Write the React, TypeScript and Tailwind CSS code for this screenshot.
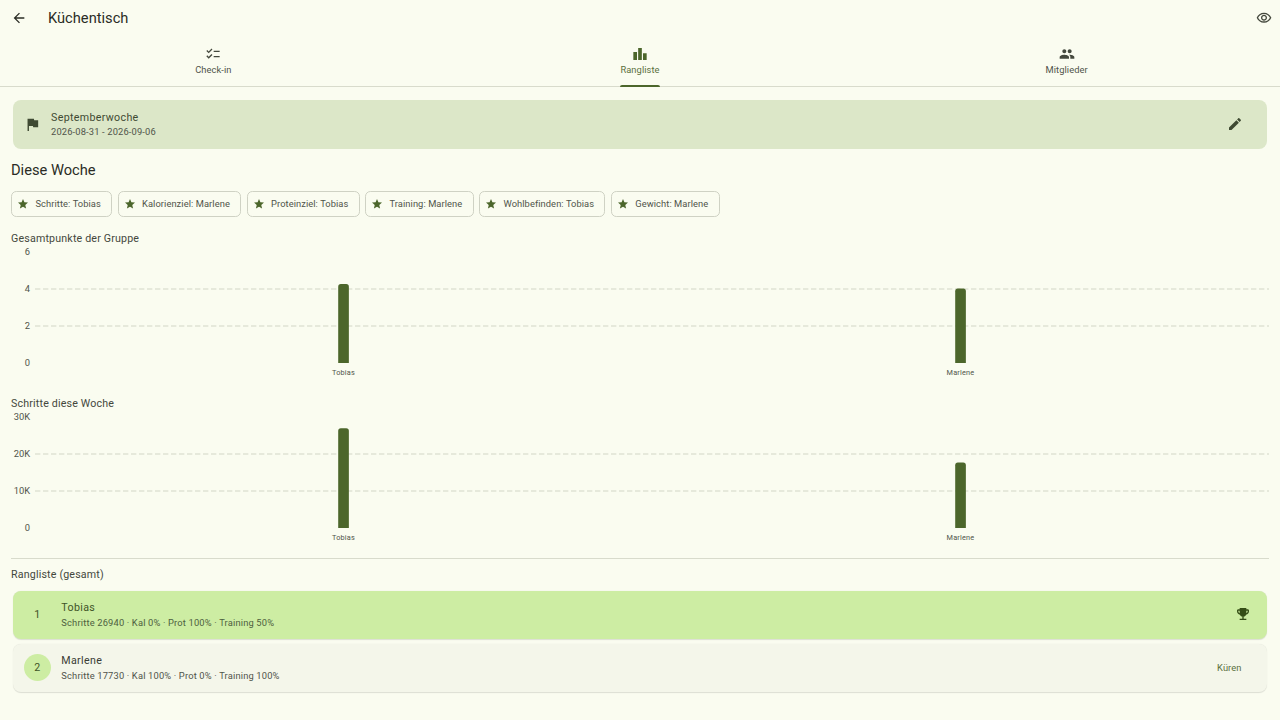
import React from "react";

const P = {
  back: "M20 11H7.83l5.59-5.59L12 4l-8 8 8 8 1.41-1.41L7.83 13H20v-2z",
  eye: "M12 6c3.79 0 7.17 2.13 8.82 5.5C19.17 14.87 15.79 17 12 17s-7.17-2.13-8.82-5.5C4.83 8.13 8.21 6 12 6m0-2C7 4 2.73 7.11 1 11.5 2.73 15.89 7 19 12 19s9.27-3.11 11-7.5C21.27 7.11 17 4 12 4zm0 5c1.38 0 2.5 1.12 2.5 2.5S13.38 14 12 14s-2.5-1.12-2.5-2.5S10.62 9 12 9m0-2c-2.48 0-4.5 2.02-4.5 4.5S9.52 16 12 16s4.5-2.02 4.5-4.5S14.48 7 12 7z",
  check: "M22 7h-9v2h9V7zm0 8h-9v2h9v-2zM5.54 11 2 7.46l1.41-1.41 2.12 2.12 4.24-4.24 1.41 1.41L5.54 11zm0 8L2 15.46l1.41-1.41 2.12 2.12 4.24-4.24 1.41 1.41L5.54 19z",
  bars: "M7.5 21H2V9h5.5v12zm7.25-18h-5.5v18h5.5V3zM22 11h-5.5v10H22V11z",
  group: "M16 11c1.66 0 2.99-1.34 2.99-3S17.66 5 16 5c-1.66 0-3 1.34-3 3s1.34 3 3 3zm-8 0c1.66 0 2.99-1.34 2.99-3S9.66 5 8 5C6.34 5 5 6.34 5 8s1.34 3 3 3zm0 2c-2.33 0-7 1.17-7 3.5V19h14v-2.5c0-2.33-4.67-3.5-7-3.5zm8 0c-.29 0-.62.02-.97.05 1.16.84 1.97 1.97 1.97 3.45V19h6v-2.5c0-2.33-4.67-3.5-7-3.5z",
  flag: "M14.4 6 14 4H5v17h2v-7h5.6l.4 2h7V6z",
  edit: "M3 17.25V21h3.75L17.81 9.94l-3.75-3.75L3 17.25zM20.71 7.04c.39-.39.39-1.02 0-1.41l-2.34-2.34c-.39-.39-1.02-.39-1.41 0l-1.83 1.83 3.75 3.75 1.83-1.83z",
  star: "M12 17.27 18.18 21l-1.64-7.03L22 9.24l-7.19-.61L12 2 9.19 8.63 2 9.24l5.46 4.73L5.82 21z",
  trophy: "M19 5h-2V3H7v2H5c-1.1 0-2 .9-2 2v1c0 2.55 1.92 4.63 4.39 4.94.63 1.5 1.98 2.63 3.61 2.96V19H7v2h10v-2h-4v-3.1c1.63-.33 2.98-1.46 3.61-2.96C19.08 12.63 21 10.55 21 8V7c0-1.1-.9-2-2-2zM5 8V7h2v3.82C5.84 10.4 5 9.3 5 8zm14 0c0 1.3-.84 2.4-2 2.82V7h2v1z",
};

function Icon({ d, size = 16, className = "" }: { d: string; size?: number; className?: string }) {
  return (
    <svg viewBox="0 0 24 24" width={size} height={size} fill="currentColor" className={`shrink-0 ${className}`}>
      <path d={d} />
    </svg>
  );
}

function Tab({ icon, label, active }: { icon: string; label: string; active?: boolean }) {
  return (
    <div className="relative flex flex-col items-center pt-[10px]">
      <Icon d={icon} size={16} className={active ? "text-[#4c662b]" : "text-[#44483d]"} />
      <span className={`mt-[1px] text-[9.33px] leading-[14px] tracking-[0.07px] ${active ? "text-[#5a7040]" : "text-[#50544a]"}`}>
        {label}
      </span>
      {active && <span className="absolute bottom-[-1px] h-[2px] w-[40px] rounded-t-[2px] bg-[#4c662b]" />}
    </div>
  );
}

function Chip({ label }: { label: string }) {
  return (
    <div className="flex h-[25.5px] items-center gap-[6.5px] rounded-[5.33px] border border-[#cfd2c4] pl-[5px] pr-[10.3px]">
      <Icon d={P.star} size={12} className="text-[#4c662b]" />
      <span className="text-[9.33px] tracking-[0.07px] text-[#50544a]">{label}</span>
    </div>
  );
}

function Chart({ title, ticks, values }: { title: string; ticks: string[]; values: number[] }) {
  const H = 111;
  const W = 1234;
  return (
    <div>
      <div className="mb-[5px] h-[16px] text-[10.67px] leading-[16px] tracking-[0.17px] text-[#44483d]">{title}</div>
      <div className="flex h-[111px] items-stretch">
        <div className="-my-[6px] flex w-[19px] flex-col justify-between text-right text-[9.33px] leading-[12px] text-[#50544a]">
          {ticks.map((t) => (
            <span key={t} className="whitespace-nowrap">{t}</span>
          ))}
        </div>
        <svg viewBox={`0 0 ${W} ${H}`} width={W} height={H} className="ml-[5px] shrink-0">
          {[37, 74].map((y) => (
            <line key={y} x1={0} x2={W} y1={y} y2={y} stroke="#dfe2d4" strokeWidth={1.33} strokeDasharray="5.33 2.67" />
          ))}
          {values.map((v, i) => {
            const x = i * 617 + 303.2;
            const t = H - v;
            return (
              <path key={i} d={`M${x} ${H}V${t + 2.7}Q${x} ${t} ${x + 2.7} ${t}H${x + 8}Q${x + 10.67} ${t} ${x + 10.67} ${t + 2.7}V${H}Z`} fill="#4c662b" />
            );
          })}
        </svg>
      </div>
      <div className="ml-[24px] grid w-[1234px] grid-cols-2 pt-[4px] text-center text-[7.33px] leading-[11px] tracking-[0.2px] text-[#50544a]">
        <span>Tobias</span>
        <span>Marlene</span>
      </div>
    </div>
  );
}

function Row({ rank, name, sub, first }: { rank: string; name: string; sub: string; first?: boolean }) {
  return (
    <div className={`mx-[2px] flex h-[48px] items-center rounded-[8px] pl-[11px] pr-[16px] shadow-[0_0.5px_1px_rgba(0,0,0,0.12)] ${first ? "bg-[#cdeda3]" : "bg-[#f4f6ea]"}`}>
      <div className={`flex h-[26.67px] w-[26.67px] shrink-0 items-center justify-center rounded-full text-[10.67px] text-[#3f5528] ${first ? "" : "bg-[#cdeda3]"}`}>
        {rank}
      </div>
      <div className="ml-[10.7px] flex-1">
        <div className={`text-[10.67px] leading-[16px] tracking-[0.33px] ${first ? "text-[#3f5528]" : "text-[#3a3c35]"}`}>{name}</div>
        <div className={`text-[9.33px] leading-[14px] tracking-[0.17px] ${first ? "text-[#4d5f40]" : "text-[#50544a]"}`}>{sub}</div>
      </div>
      {first ? (
        <Icon d={P.trophy} size={16} className="mb-[2px] mr-[0.5px] text-[#354e16]" />
      ) : (
        <span className="mr-[9.5px] text-[9.33px] tracking-[0.07px] text-[#5a7040]">Küren</span>
      )}
    </div>
  );
}

export default function App() {
  return (
    <div className="h-[720px] w-[1280px] overflow-hidden bg-[#fafcf0] font-['Roboto',sans-serif] text-[#2a2c25]">
      <header className="flex h-[36px] items-center pl-[10.5px] pr-[8px]">
        <Icon d={P.back} size={16} />
        <h1 className="ml-[21.5px] flex-1 text-[14.67px] font-normal">Küchentisch</h1>
        <Icon d={P.eye} size={16} className="text-[#44483d]" />
      </header>
      <nav className="grid h-[51px] grid-cols-3 border-b border-[#d8dbcc]">
        <Tab icon={P.check} label="Check-in" />
        <Tab icon={P.bars} label="Rangliste" active />
        <Tab icon={P.group} label="Mitglieder" />
      </nav>
      <main className="px-[11px] pt-[13px]">
        <section className="mx-[2px] flex h-[49px] items-center rounded-[8px] bg-[#dce7c8] pl-[11px] pr-[24px]">
          <Icon d={P.flag} size={17} className="text-[#3f4a33]" />
          <div className="ml-[10px] flex-1">
            <div className="text-[10.67px] leading-[15.5px] tracking-[0.33px] text-[#3f4a33]">Septemberwoche</div>
            <div className="text-[9.33px] leading-[14px] tracking-[0.15px] text-[#50544a]">2026-08-31 - 2026-09-06</div>
          </div>
          <Icon d={P.edit} size={16} className="mb-[1px] text-[#3f4a33]" />
        </section>
        <h2 className="mt-[11px] text-[14.67px] font-normal leading-[20px]">Diese Woche</h2>
        <div className="mt-[11px] flex gap-[5.33px]">
          {["Schritte: Tobias", "Kalorienziel: Marlene", "Proteinziel: Tobias", "Training: Marlene", "Wohlbefinden: Tobias", "Gewicht: Marlene"].map((c) => (
            <Chip key={c} label={c} />
          ))}
        </div>
        <div className="mt-[14px]">
          <Chart title="Gesamtpunkte der Gruppe" ticks={["6", "4", "2", "0"]} values={[79, 74.5]} />
        </div>
        <div className="mt-[18px]">
          <Chart title="Schritte diese Woche" ticks={["30K", "20K", "10K", "0"]} values={[99.7, 65.5]} />
        </div>
        <div className="mt-[15.5px] h-px bg-[#d8dbcc]" />
        <div className="mt-[8px] text-[10.67px] leading-[16px] tracking-[0.17px] text-[#44483d]">Rangliste (gesamt)</div>
        <div className="mt-[7.5px] flex flex-col gap-[5px]">
          <Row first rank="1" name="Tobias" sub="Schritte 26940 · Kal 0% · Prot 100% · Training 50%" />
          <Row rank="2" name="Marlene" sub="Schritte 17730 · Kal 100% · Prot 0% · Training 100%" />
        </div>
      </main>
    </div>
  );
}
